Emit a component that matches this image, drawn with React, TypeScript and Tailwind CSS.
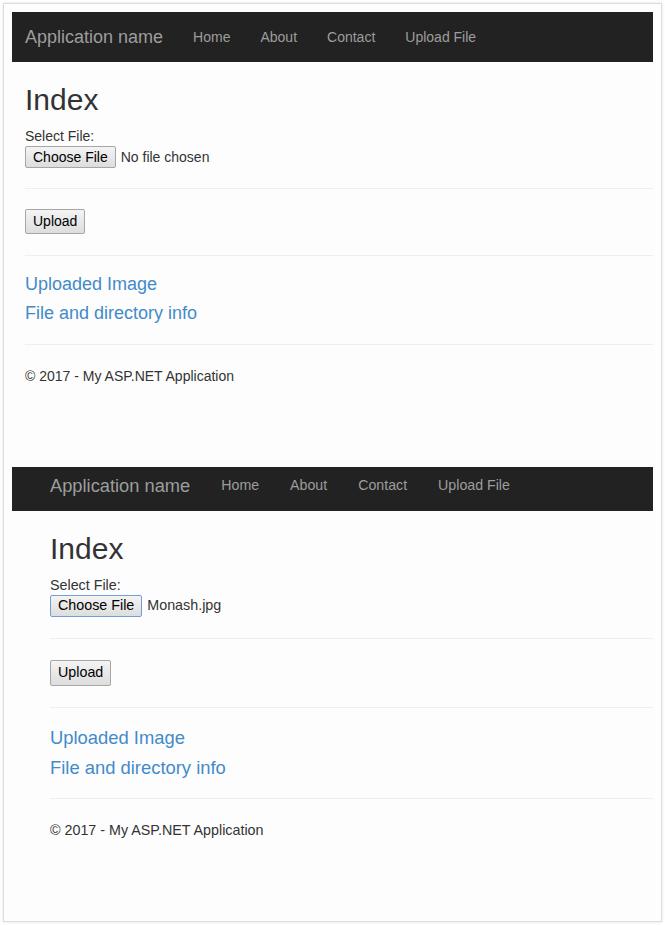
import React from "react";

const links = ["Home", "About", "Contact", "Upload File"];

const variants = {
  first: {
    nav: "h-[50px] pl-[13px]",
    brand: "pr-[15px] text-[18px]",
    link: "px-[15px] text-[14px]",
    body: "pl-[13px] text-[14px]",
    title: "mt-[21px]",
    hr: "mt-[20px]",
    upload: "mt-[20px] h-[25px]",
    hr2: "mt-[21px]",
    links: "mt-[14px] text-[18px] leading-[29px]",
    hr3: "mt-[16px]",
    footer: "mt-[21px] mb-[81px]",
  },
  second: {
    nav: "h-[44px] pl-[38px] pb-[7px]",
    brand: "pr-[15.5px] text-[18.3px]",
    link: "px-[15.5px] text-[14.2px]",
    body: "pl-[38px] text-[14.3px]",
    title: "mt-[21px]",
    hr: "mt-[21px]",
    upload: "mt-[21px] h-[26px]",
    hr2: "mt-[21px]",
    links: "mt-[15px] text-[18.4px] leading-[30px]",
    hr3: "mt-[15px]",
    footer: "mt-[21px] mb-[81px]",
  },
};

const Section = ({ v, fileName, focused }: { v: keyof typeof variants; fileName: string; focused?: boolean }) => {
  const c = variants[v];
  return (
    <div>
      <nav className={`flex items-center bg-[#222222] ${c.nav}`}>
        <span className={`text-[#9d9d9d] ${c.brand}`}>Application name</span>
        <ul className="flex items-center">
          {links.map((l) => (
            <li key={l} className={`text-[#9d9d9d] ${c.link}`}>
              {l}
            </li>
          ))}
        </ul>
      </nav>

      <div className={`text-[#333333] ${c.body}`}>
        <h2 className={`mb-[10px] text-[30px] leading-[33px] ${c.title}`}>Index</h2>
        <div className="leading-[20px]">Select File:</div>
        <div className="flex items-center">
          <span
            className={`flex h-[22px] items-center rounded-[2px] border bg-linear-to-b from-[#f4f4f4] to-[#dddddd] px-[7px] text-black ${
              focused ? "border-[#6f9ee0]" : "border-[#a6a6a6]"
            }`}
          >
            Choose File
          </span>
          <span className="ml-[5px]">{fileName}</span>
        </div>

        <hr className={`border-[#eeeeee] ${c.hr}`} />

        <button
          className={`flex items-center rounded-[2px] border border-[#a6a6a6] bg-linear-to-b from-[#f4f4f4] to-[#dddddd] px-[7px] text-black ${c.upload}`}
        >
          Upload
        </button>

        <hr className={`border-[#eeeeee] ${c.hr2}`} />

        {/* links */}
        <div className={`text-[#428bca] ${c.links}`}>
          <div>Uploaded Image</div>
          <div>File and directory info</div>
        </div>

        <hr className={`border-[#eeeeee] ${c.hr3}`} />

        <footer className={`leading-[20px] ${c.footer}`}>© 2017 - My ASP.NET Application</footer>
      </div>
    </div>
  );
};

const App = () => {
  return (
    <div className="bg-white font-['Liberation_Sans',Arial,sans-serif]">
      <div className="m-[3px] border border-[#dddddd] bg-[#fdfdfd] px-[8px] pt-[8px] shadow-[0_0_3px_rgba(0,0,0,0.12)]">
        <Section v="first" fileName="No file chosen" />
        <Section v="second" fileName="Monash.jpg" focused />
      </div>
    </div>
  );
};

export default App;
